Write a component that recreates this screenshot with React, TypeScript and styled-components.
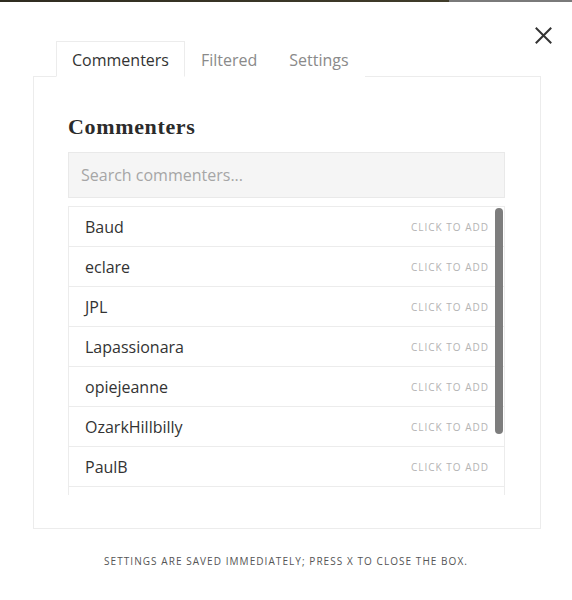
import React from "react";
import styled, { createGlobalStyle } from "styled-components";

const GlobalStyle = createGlobalStyle`
  html, body { margin: 0; padding: 0; background: #ffffff; }
  body { font-family: "Open Sans", "Liberation Sans", sans-serif; color: #333333; }
  * { box-sizing: border-box; }
`;

const Page = styled.div`
  position: relative;
  width: 572px;
  height: 600px;
  background: #ffffff;
`;

const TopStrip = styled.div`
  height: 2px;
  background: linear-gradient(to right, #2f2c20 0, #403c2a 449px, #7a7a7a 449px, #7a7a7a 100%);
`;

const CloseButton = styled.button`
  position: absolute;
  top: 27px;
  left: 535px;
  width: 17px;
  height: 17px;
  padding: 0;
  border: 0;
  background: transparent;
  display: flex;
  align-items: center;
  justify-content: center;
  cursor: pointer;
`;

const Dialog = styled.div`
  padding: 39px 31px 0 33px;
  display: flex;
  flex-direction: column;
`;

const TabBar = styled.div`
  display: flex;
  padding-left: 23px;
  margin-bottom: -1px;
  position: relative;
  z-index: 1;
`;

const Tab = styled.button<{ $active?: boolean }>`
  height: 36px;
  margin: 0;
  padding: 1px 15px 0;
  font-family: "Open Sans", "Liberation Sans", sans-serif;
  font-size: 16px;
  color: ${(p) => (p.$active ? "#333333" : "#8a8a8a")};
  background: #ffffff;
  border: 1px solid ${(p) => (p.$active ? "#ececec" : "transparent")};
  border-bottom: 1px solid ${(p) => (p.$active ? "#ffffff" : "transparent")};
  display: flex;
  align-items: center;
  cursor: pointer;
`;

const Panel = styled.div`
  width: 508px;
  border: 1px solid #ececec;
  padding: 38px 35px 33px 34px;
  display: flex;
  flex-direction: column;
`;

const Heading = styled.h2`
  margin: 0;
  padding-top: 1px;
  font-family: "Liberation Serif", "DejaVu Serif", serif;
  font-weight: 700;
  font-size: 22px;
  line-height: 21px;
  letter-spacing: 0.65px;
  color: #2b2b2b;
`;

const SearchInput = styled.input`
  margin-top: 15px;
  height: 46px;
  width: 100%;
  padding: 0 12px;
  background: #f5f5f5;
  border: 1px solid #e9e9e9;
  font-family: "Open Sans", "Liberation Sans", sans-serif;
  font-size: 16px;
  color: #333333;
  outline: none;
  &::placeholder { color: #a6a6a6; }
`;

const ListWrap = styled.div`
  position: relative;
  margin-top: 8px;
  height: 289px;
  overflow: hidden;
  border-top: 1px solid #ececec;
`;

const Row = styled.div`
  height: 40px;
  display: flex;
  align-items: center;
  justify-content: space-between;
  padding: 0 15px 0 16px;
  border-left: 1px solid #ececec;
  border-right: 1px solid #ececec;
  border-bottom: 1px solid #ececec;
  cursor: pointer;
`;

const Name = styled.span`
  font-size: 16px;
  color: #333333;
`;

const AddHint = styled.span`
  font-size: 10px;
  letter-spacing: 1px;
  color: #b4b4b4;
  text-transform: uppercase;
`;

const Thumb = styled.div`
  position: absolute;
  top: 1px;
  right: 2px;
  width: 8px;
  height: 226px;
  border-radius: 4px;
  background: #7d7d7d;
`;

const Footer = styled.p`
  margin: 25px 0 0;
  text-align: center;
  font-size: 10px;
  line-height: 14px;
  letter-spacing: 1.06px;
  color: #555555;
  text-transform: uppercase;
  padding-right: 2px;
`;

const names = [
  "Baud",
  "eclare",
  "JPL",
  "Lapassionara",
  "opiejeanne",
  "OzarkHillbilly",
  "PaulB",
  "Rikster",
  "Zeke",
];

export default function App() {
  return (
    <Page>
      <GlobalStyle />
      <TopStrip />
      <CloseButton aria-label="Close">
        <svg width="17" height="17" viewBox="0 0 17 17">
          <path d="M1.5 1.5 L15.5 15.5 M15.5 1.5 L1.5 15.5" stroke="#333" strokeWidth="2" strokeLinecap="square" fill="none" />
        </svg>
      </CloseButton>
      <Dialog>
        <TabBar>
          <Tab $active>Commenters</Tab>
          <Tab>Filtered</Tab>
          <Tab>Settings</Tab>
        </TabBar>
        <Panel>
          <Heading>Commenters</Heading>
          <SearchInput placeholder="Search commenters..." />
          <ListWrap>
            {names.map((n) => (
              <Row key={n}>
                <Name>{n}</Name>
                <AddHint>Click to add</AddHint>
              </Row>
            ))}
            <Thumb />
          </ListWrap>
        </Panel>
        <Footer>Settings are saved immediately; press X to close the box.</Footer>
      </Dialog>
    </Page>
  );
}
